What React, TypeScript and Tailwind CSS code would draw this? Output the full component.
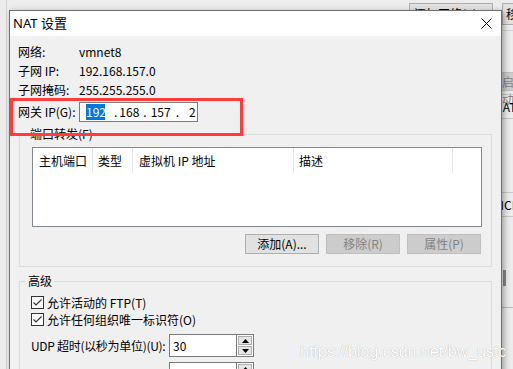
import React from 'react';

const cjk = "font-['Noto_Sans_CJK_SC',sans-serif]";

function Check() {
  return (
    <svg width="13" height="13" viewBox="0 0 13 13" className="shrink-0">
      <rect x="0.5" y="0.5" width="12" height="12" fill="#fff" stroke="#333" />
      <path d="M2.5 6.5 L5 9 L10.5 3.5" fill="none" stroke="#333" strokeWidth="1.2" />
    </svg>
  );
}

function Spin({ value }: { value: string }) {
  return (
    <div className="flex h-[23px]">
      <div className="w-[68px] h-full border border-[#7a7a7a] bg-white pl-[3px] leading-[21px]">{value}</div>
      <div className="w-[17px] h-full flex flex-col bg-white border border-[#7a7a7a] border-l-0 p-px gap-px">
        <div className="flex-1 bg-[#e6e6e6] border border-[#adadad] flex items-center justify-center">
          <svg width="7" height="4" viewBox="0 0 7 4"><path d="M0 4 L3.5 0 L7 4 Z" fill="#000" /></svg>
        </div>
        <div className="flex-1 bg-[#e6e6e6] border border-[#adadad] flex items-center justify-center">
          <svg width="7" height="4" viewBox="0 0 7 4"><path d="M0 0 L3.5 4 L7 0 Z" fill="#000" /></svg>
        </div>
      </div>
    </div>
  );
}

const info = [
  ['网络:', 'vmnet8'],
  ['子网 IP:', '192.168.157.0'],
  ['子网掩码:', '255.255.255.0'],
];

export default function App() {
  return (
    <div className={`relative w-[513px] h-[369px] overflow-hidden bg-[#ececec] text-[12px] text-black ${cjk}`}>
      {/* background window */}
      <div className="absolute left-[6px] top-0 w-px h-full bg-[#d4d4d4]" />
      <div className="absolute left-[409px] top-[3px] flex gap-[9px]">
        <div className="w-[84px] h-[22px] border border-[#adadad] bg-[#e1e1e1] pl-[4px] leading-[18px] pt-[1px]">添加网络(E)...</div>
        <div className="w-[80px] h-[22px] border border-[#adadad] bg-[#e1e1e1] pl-[3px] leading-[18px] pt-[1px]">移除网络(O)</div>
      </div>
      <div className="absolute left-[484px] top-[30px] w-[40px] flex flex-col">
        <div className="h-px bg-[#d0d0d0]" />
        <div className="mt-[41px] h-[19px] bg-[#cccccc] border border-[#bfbfbf] text-[#838383] pl-[17px] leading-[17px]">启动</div>
        <div className="mt-[3px] h-[25px] border-y border-[#c8c8c8] pl-[10px] leading-[23px]">NAT</div>
        <div className="mt-[73px] h-[25px] border-y border-[#c8c8c8] pl-[3px] leading-[23px]">DHCP</div>
        <div className="mt-[53px] ml-[19px] w-[3px] h-[16px] bg-[#8a8a8a]" />
        <div className="mt-[21px] h-px bg-[#b8b8b8]" />
      </div>

      {/* dialog */}
      <div className="absolute left-[9px] top-[10px] w-[493px] h-[400px] border border-[#707070] bg-[#f0f0f0] shadow-[2px_2px_6px_rgba(0,0,0,0.35)]">
        <div className="h-[25px] bg-white flex items-center justify-between pl-[3px] pr-[9px]">
          <span className="text-[13px] font-['Noto_Sans','Noto_Sans_CJK_SC',sans-serif]">NAT 设置</span>
          <svg width="11" height="11" viewBox="0 0 11 11">
            <path d="M0.5 0.5 L10.5 10.5 M10.5 0.5 L0.5 10.5" stroke="#000" strokeWidth="1" />
          </svg>
        </div>

        <div className="pt-[6px]">
          {info.map(([k, v]) => (
            <div key={k} className="flex h-[19px] leading-[19px] pl-[8px]">
              <span className="w-[61px]">{k}</span>
              <span>{v}</span>
            </div>
          ))}
          <div className="flex items-center h-[20px] mt-[3px] pl-[8px]">
            <span className="w-[61px]">网关 IP(G):</span>
            <div className="w-[119px] h-[20px] border border-[#7a7a7a] bg-white flex items-center pl-[6px] leading-[16px]">
              <span className="bg-[#0078d7] text-white w-[19px] text-center">192</span>
              <span className="ml-[9px]">.</span>
              <span className="ml-[2px]">168</span>
              <span className="ml-[4px]">.</span>
              <span className="ml-[4px]">157</span>
              <span className="ml-[5px]">.</span>
              <span className="ml-[10px]">2</span>
            </div>
          </div>

          <fieldset className="mx-[9px] mt-[4px] border border-[#dcdcdc] pb-[12px]">
            <legend className="ml-[8px] px-[2px] leading-[16px]">端口转发(F)</legend>
            <div className="ml-[12px] mt-[5px] w-[450px] h-[80px] border border-[#828790] bg-white">
              <div className="flex h-[25px] leading-[25px]">
                <div className="w-[60px] border-r border-[#e5e5e5] pl-[6px]">主机端口</div>
                <div className="w-[40px] border-r border-[#e5e5e5] pl-[5px]">类型</div>
                <div className="w-[161px] border-r border-[#e5e5e5] pl-[6px]">虚拟机 IP 地址</div>
                <div className="w-[159px] border-r border-[#e5e5e5] pl-[5px]">描述</div>
              </div>
            </div>
            <div className="flex justify-end gap-[7px] mt-[7px] mr-[10px]">
              <div className="w-[74px] h-[20px] border border-[#adadad] bg-[#e1e1e1] text-center leading-[18px]">添加(A)...</div>
              <div className="w-[74px] h-[20px] border border-[#bfbfbf] bg-[#cccccc] text-[#838383] text-center leading-[18px]">移除(R)</div>
              <div className="w-[74px] h-[20px] border border-[#bfbfbf] bg-[#cccccc] text-[#838383] text-center leading-[18px]">属性(P)</div>
            </div>
          </fieldset>

          <fieldset className="mx-[9px] mt-[6px] border border-[#dcdcdc] pb-[12px]">
            <legend className="ml-[6px] px-[2px] leading-[16px]">高级</legend>
            <div className="mt-[5px] ml-[11px] flex flex-col">
              <div className="flex items-center gap-[3px] h-[17px]">
                <Check />
                <span>允许活动的 FTP(T)</span>
              </div>
              <div className="flex items-center gap-[3px] h-[17px]">
                <Check />
                <span>允许任何组织唯一标识符(O)</span>
              </div>
              <div className="flex items-center mt-[6px]">
                <span className="w-[138px] shrink-0 whitespace-nowrap tracking-[-0.3px]">UDP 超时(以秒为单位)(U):</span>
                <Spin value="30" />
              </div>
              <div className="flex items-center mt-[5px]">
                <span className="w-[138px] shrink-0"></span>
                <Spin value="" />
              </div>
            </div>
          </fieldset>
        </div>
      </div>

      {/* annotation + watermark overlays */}
      <div className="absolute left-[10px] top-[98px] w-[233px] h-[38px] border-[3px] border-[#ff3b3b]" />
      <div className="absolute left-[300px] top-[340px] text-[16px] text-white font-['Liberation_Sans',sans-serif] [text-shadow:0_0_1px_rgba(0,0,0,0.35)]">
        https://blog.csdn.net/bw_ustc
      </div>
    </div>
  );
}
